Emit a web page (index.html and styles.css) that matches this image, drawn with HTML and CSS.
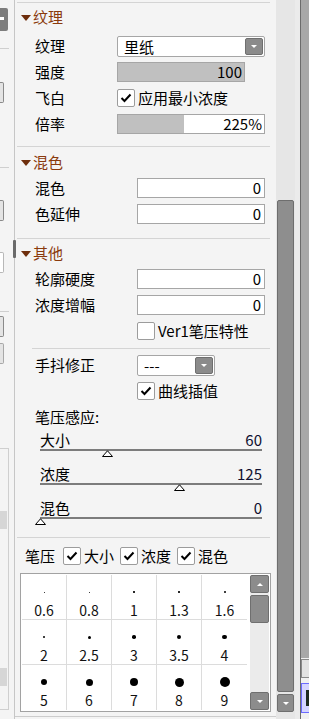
FILE: index.html
```html
<!DOCTYPE html>
<html lang="zh-CN">
<head>
  <meta charset="UTF-8">
  <title>笔刷设置</title>
  <link rel="stylesheet" href="styles.css">
</head>
<body>

<div class="app">
  <!-- 左侧残留面板 -->
  <div class="side">
    <div class="s-dark"><i></i></div>
    <div class="s-line l1"></div>
    <div class="s-box b1"></div>
    <div class="s-line l2"></div>
    <div class="s-box b2"></div>
    <div class="s-box white b3"></div>
    <div class="s-line l3"></div>
    <div class="s-box b4"></div>
    <div class="s-box light b5"></div>
    <div class="s-panel">
      <div class="s-gray g1"></div>
      <div class="s-gray g2"></div>
    </div>
  </div>
  <div class="grip"></div>

  <!-- 主面板 -->
  <div class="panel">
    <div class="hline top"></div>

    <div class="sec-head h1"><span class="tri"></span>纹理</div>
    <div class="rows r1">
      <div class="row">
        <span class="label">纹理</span>
        <div class="combo">里纸<span class="drop"></span></div>
      </div>
      <div class="row">
        <span class="label">强度</span>
        <div class="bar short" style="--p:100%">100</div>
      </div>
      <div class="row">
        <span class="label">飞白</span>
        <span class="check"><svg width="12" height="10" viewBox="0 0 12 10"><path d="M1.5 5 L4.5 8 L10.5 1.5" fill="none" stroke="#000" stroke-width="2"/></svg></span>
        <span class="ctext">应用最小浓度</span>
      </div>
      <div class="row">
        <span class="label">倍率</span>
        <div class="bar" style="--p:45%">225%</div>
      </div>
    </div>

    <div class="hline s1"></div>

    <div class="sec-head h2"><span class="tri"></span>混色</div>
    <div class="rows r2 wide">
      <div class="row">
        <span class="label">混色</span>
        <div class="num">0</div>
      </div>
      <div class="row">
        <span class="label">色延伸</span>
        <div class="num">0</div>
      </div>
    </div>

    <div class="hline s2"></div>

    <div class="sec-head h3"><span class="tri"></span>其他</div>
    <div class="rows r3 wide">
      <div class="row">
        <span class="label">轮廓硬度</span>
        <div class="num">0</div>
      </div>
      <div class="row">
        <span class="label">浓度增幅</span>
        <div class="num">0</div>
      </div>
      <div class="row">
        <span class="label"></span>
        <span class="check"></span>
        <span class="ctext">Ver1笔压特性</span>
      </div>
    </div>

    <div class="hline s3"></div>

    <div class="rows r4 wide">
      <div class="row">
        <span class="label">手抖修正</span>
        <div class="combo small">---<span class="drop"></span></div>
      </div>
      <div class="row">
        <span class="label"></span>
        <span class="check"><svg width="12" height="10" viewBox="0 0 12 10"><path d="M1.5 5 L4.5 8 L10.5 1.5" fill="none" stroke="#000" stroke-width="2"/></svg></span>
        <span class="ctext">曲线插值</span>
      </div>
      <div class="row">
        <span class="label">笔压感应:</span>
      </div>
    </div>

    <div class="sliders">
      <div class="slider">
        <div class="slabel"><span>大小</span><span>60</span></div>
        <div class="track"><svg class="thumb" style="left:30%" width="11" height="7" viewBox="0 0 11 7"><polygon points="0.5,6.5 5.5,0.8 10.5,6.5" fill="#fff" stroke="#000"/></svg></div>
      </div>
      <div class="slider">
        <div class="slabel"><span>浓度</span><span>125</span></div>
        <div class="track"><svg class="thumb" style="left:62.5%" width="11" height="7" viewBox="0 0 11 7"><polygon points="0.5,6.5 5.5,0.8 10.5,6.5" fill="#fff" stroke="#000"/></svg></div>
      </div>
      <div class="slider">
        <div class="slabel"><span>混色</span><span>0</span></div>
        <div class="track"><svg class="thumb" style="left:0%" width="11" height="7" viewBox="0 0 11 7"><polygon points="0.5,6.5 5.5,0.8 10.5,6.5" fill="#fff" stroke="#000"/></svg></div>
      </div>
    </div>

    <div class="hline s4"></div>

    <div class="penrow">
      <span class="pen-title">笔压</span>
      <span class="opt"><span class="check"><svg width="12" height="10" viewBox="0 0 12 10"><path d="M1.5 5 L4.5 8 L10.5 1.5" fill="none" stroke="#000" stroke-width="2"/></svg></span>大小</span>
      <span class="opt"><span class="check"><svg width="12" height="10" viewBox="0 0 12 10"><path d="M1.5 5 L4.5 8 L10.5 1.5" fill="none" stroke="#000" stroke-width="2"/></svg></span>浓度</span>
      <span class="opt"><span class="check"><svg width="12" height="10" viewBox="0 0 12 10"><path d="M1.5 5 L4.5 8 L10.5 1.5" fill="none" stroke="#000" stroke-width="2"/></svg></span>混色</span>
    </div>

    <div class="grid">
      <div class="cells">
        <div class="cell"><div class="dotbox"><i style="width:1px;height:1px"></i></div><span>0.6</span></div>
        <div class="cell"><div class="dotbox"><i style="width:1px;height:1px"></i></div><span>0.8</span></div>
        <div class="cell"><div class="dotbox"><i style="width:1.5px;height:1.5px"></i></div><span>1</span></div>
        <div class="cell"><div class="dotbox"><i style="width:1.5px;height:1.5px"></i></div><span>1.3</span></div>
        <div class="cell"><div class="dotbox"><i style="width:2px;height:2px"></i></div><span>1.6</span></div>
        <div class="cell"><div class="dotbox"><i style="width:2.5px;height:2.5px"></i></div><span>2</span></div>
        <div class="cell"><div class="dotbox"><i style="width:3px;height:3px"></i></div><span>2.5</span></div>
        <div class="cell"><div class="dotbox"><i style="width:3.5px;height:3.5px"></i></div><span>3</span></div>
        <div class="cell"><div class="dotbox"><i style="width:4px;height:4px"></i></div><span>3.5</span></div>
        <div class="cell"><div class="dotbox"><i style="width:4.5px;height:4.5px"></i></div><span>4</span></div>
        <div class="cell"><div class="dotbox"><i style="width:6px;height:6px"></i></div><span>5</span></div>
        <div class="cell"><div class="dotbox"><i style="width:7px;height:7px"></i></div><span>6</span></div>
        <div class="cell"><div class="dotbox"><i style="width:8px;height:8px"></i></div><span>7</span></div>
        <div class="cell"><div class="dotbox"><i style="width:9px;height:9px"></i></div><span>8</span></div>
        <div class="cell"><div class="dotbox"><i style="width:10px;height:10px"></i></div><span>9</span></div>
      </div>
      <div class="gscroll">
        <div class="sbtn up"></div>
        <div class="sthumb"></div>
        <div class="strack"></div>
        <div class="sbtn down"></div>
      </div>
    </div>

    <div class="hline bottom"></div>
  </div>

  <!-- 右侧滚动条 -->
  <div class="vscroll">
    <div class="vthumb"></div>
    <div class="sbtn down"></div>
  </div>
  <div class="gutter"></div>
  <div class="farright">
    <div class="fr-bar"></div>
    <div class="fr-btn"></div>
    <div class="fr-blue"><i></i></div>
  </div>
</div>

</body>
</html>
```

FILE: styles.css
```css
* {
  margin: 0;
  padding: 0;
  box-sizing: border-box;
}

body {
  width: 309px;
  height: 719px;
  overflow: hidden;
  background-color: #f4f4f4;
  font-family: "Noto Sans CJK SC", "Microsoft YaHei", sans-serif;
  font-size: 15px;
  color: #000;
}

.app {
  display: flex;
  height: 719px;
  position: relative;
}

/* 左侧 */
.side {
  width: 15px;
  flex: none;
  border-right: 1px solid #c6c6c6;
  display: flex;
  flex-direction: column;
  align-items: flex-start;
}

.s-dark {
  width: 8px;
  height: 23px;
  margin-top: 8px;
  background-color: #7d7d7d;
  border-radius: 0 2px 2px 0;
  padding-top: 9px;
}

.s-dark i {
  display: block;
  width: 4px;
  height: 3px;
  background-color: #fff;
}

.s-line {
  width: 9px;
  height: 1px;
  background-color: #cfcfcf;
}

.l1 { margin-top: 17px; }
.l2 { margin-top: 64px; }
.l3 { margin-top: 38px; }

.s-box {
  width: 4px;
  height: 21px;
  border: 1px solid #8a8a8a;
  border-left: none;
  background-color: #e4e4e4;
  border-radius: 0 2px 2px 0;
}

.s-box.white {
  background-color: #fff;
  border-color: #b8b8b8;
}

.s-box.light {
  border-color: #a8a8a8;
}

.b1 { margin-top: 33px; }
.b2 { margin-top: 32px; }
.b3 { margin-top: 31px; }
.b4 { margin-top: 4px; }
.b5 { margin-top: 6px; }

.s-panel {
  width: 9px;
  height: 262px;
  margin-top: 84px;
  border-top: 1px solid #cfcfcf;
  border-right: 1px solid #cfcfcf;
  border-bottom: 1px solid #cfcfcf;
  display: flex;
  flex-direction: column;
}

.s-gray {
  width: 7px;
  height: 18px;
  background-color: #d6d6d6;
}

.g1 { margin-top: 62px; }
.g2 { margin-top: 139px; }

.grip {
  position: absolute;
  left: 13px;
  top: 240px;
  width: 3px;
  height: 18px;
  background-color: #6a6a6a;
  border-radius: 1px;
}

/* 主面板 */
.panel {
  width: 261px;
  flex: none;
  padding-top: 2px;
  display: flex;
  flex-direction: column;
}

.hline {
  height: 1px;
  background-color: #d4d4d4;
  margin-left: 2px;
  margin-right: 6px;
}

.s1 { margin-top: 9px; }
.s2 { margin-top: 11px; }
.s3 { margin-top: 4px; margin-left: 17px; }
.s4 { margin-top: 4px; }
.bottom { margin-top: 4px; margin-left: 0; margin-right: 0; background-color: #cccccc; }

.sec-head {
  height: 22px;
  display: flex;
  align-items: center;
  padding-left: 6px;
  color: #8a3a0c;
  line-height: 20px;
}

.h1 { margin-top: 3px; }
.h2 { margin-top: 4px; }
.h3 { margin-top: 3px; }

.tri {
  width: 0;
  height: 0;
  border-left: 5px solid transparent;
  border-right: 5px solid transparent;
  border-top: 6px solid #6e2e0c;
  margin-right: 2px;
  margin-top: 1px;
}

.r1 { padding-top: 5px; }
.r2 { padding-top: 2px; }
.r3 { padding-top: 2px; }
.r4 { padding-top: 3px; }

.row {
  height: 26px;
  display: flex;
  align-items: center;
  padding-left: 20px;
  padding-right: 11px;
}

.label {
  width: 82px;
  flex: none;
  line-height: 20px;
  white-space: nowrap;
}

.wide .label {
  width: 102px;
}

.combo {
  flex: 1;
  height: 21px;
  background-color: #fff;
  border: 1px solid #a6a6a6;
  border-radius: 2px;
  display: flex;
  align-items: center;
  justify-content: space-between;
  padding-left: 6px;
  padding-right: 1px;
  line-height: 19px;
}

.combo.small {
  flex: none;
  width: 78px;
}

.drop {
  width: 18px;
  height: 17px;
  background-color: #8b8b8b;
  border: 1px solid #6f6f6f;
  border-radius: 2px;
  display: flex;
  align-items: center;
  justify-content: center;
}

.drop::after {
  content: "";
  border-left: 3px solid transparent;
  border-right: 3px solid transparent;
  border-top: 3px solid #fff;
}

.bar {
  flex: 1;
  height: 20px;
  border: 1px solid #a6a6a6;
  background: linear-gradient(to right, #c0c0c0 var(--p), #fff var(--p));
  text-align: right;
  padding-right: 2px;
  line-height: 18px;
}

.bar.short {
  flex: none;
  width: 128px;
}

.num {
  flex: 1;
  height: 20px;
  border: 1px solid #a6a6a6;
  background-color: #fff;
  text-align: right;
  padding-right: 3px;
  line-height: 18px;
}

.check {
  width: 18px;
  height: 18px;
  flex: none;
  background-color: #fff;
  border: 1px solid #9c9c9c;
  border-radius: 2px;
  display: flex;
  align-items: center;
  justify-content: center;
}

.ctext {
  margin-left: 3px;
  line-height: 20px;
  white-space: nowrap;
}

/* 笔压感应滑块 */
.sliders {
  margin-top: 1px;
}

.slider {
  height: 34px;
  padding: 0 14px 0 25px;
}

.slabel {
  display: flex;
  justify-content: space-between;
  height: 18px;
  line-height: 18px;
}

.slabel span:last-child {
  color: #101030;
}

.track {
  height: 2px;
  background-color: #7c7c7c;
  position: relative;
}

.thumb {
  position: absolute;
  top: 1px;
  margin-left: -5px;
}

/* 笔压选项 */
.penrow {
  height: 22px;
  margin-top: 7px;
  padding-left: 10px;
  display: flex;
  align-items: center;
  line-height: 20px;
}

.pen-title {
  margin-right: 8px;
}

.opt {
  display: flex;
  align-items: center;
  gap: 3px;
  margin-right: 6px;
}

/* 笔刷尺寸列表 */
.grid {
  height: 139px;
  margin: 6px 5px 0 5px;
  border: 1px solid #a2a2a2;
  background-color: #fff;
  padding: 1px;
  display: flex;
}

.cells {
  display: grid;
  grid-template-columns: repeat(5, 45px);
  grid-auto-rows: 45px;
}

.cell {
  border-right: 1px solid #dcdcdc;
  border-bottom: 1px solid #dcdcdc;
  display: flex;
  flex-direction: column;
  align-items: center;
}

.cell:nth-child(5n) {
  border-right: none;
}

.cell:nth-child(n+11) {
  border-bottom: none;
}

.dotbox {
  height: 26px;
  padding-top: 8px;
  display: flex;
  align-items: center;
  justify-content: center;
}

.dotbox i {
  display: block;
  background-color: #000;
  border-radius: 50%;
}

.cell span {
  line-height: 18px;
  font-size: 14px;
  color: #111;
}

.gscroll {
  width: 19px;
  margin-left: 3px;
  display: flex;
  flex-direction: column;
  background-color: #ebebeb;
}

.sbtn {
  height: 18px;
  flex: none;
  background-color: #8c8c8c;
  border: 1px solid #6f6f6f;
  border-radius: 2px;
  display: flex;
  align-items: center;
  justify-content: center;
}

.sbtn.up::after {
  content: "";
  border-left: 3px solid transparent;
  border-right: 3px solid transparent;
  border-bottom: 3px solid #fff;
}

.sbtn.down::after {
  content: "";
  border-left: 3px solid transparent;
  border-right: 3px solid transparent;
  border-top: 3px solid #fff;
}

.sthumb {
  height: 28px;
  margin-top: 2px;
  background-color: #8c8c8c;
  border: 1px solid #6f6f6f;
  border-radius: 2px;
}

.strack {
  flex: 1;
}

/* 右侧 */
.vscroll {
  width: 19px;
  flex: none;
  background-color: #e6e6e6;
  padding: 200px 1px 0;
  display: flex;
  flex-direction: column;
}

.vthumb {
  height: 492px;
  background-color: #8e8e8e;
  border: 1px solid #6e6e6e;
  border-radius: 2px;
}

.vscroll .sbtn {
  margin-top: 2px;
}

.gutter {
  width: 5px;
  flex: none;
  background-color: #ebebeb;
}

.farright {
  flex: 1;
  border-left: 1px solid #6c6c6c;
  display: flex;
  flex-direction: column;
  background-color: #f0f0f0;
}

.fr-bar {
  height: 658px;
  background-color: #a8a8a8;
}

.fr-btn {
  height: 19px;
  margin-top: 1px;
  background-color: #e2e2e2;
  border: 1px solid #8a8a8a;
  border-right: none;
}

.fr-blue {
  height: 30px;
  margin-top: 5px;
  background-color: #d4d4ff;
  border: 1px solid #6a6aff;
  border-right: none;
  padding: 6px 0 0 4px;
}

.fr-blue i {
  display: block;
  height: 16px;
  background-color: #1e2a1e;
}
```
